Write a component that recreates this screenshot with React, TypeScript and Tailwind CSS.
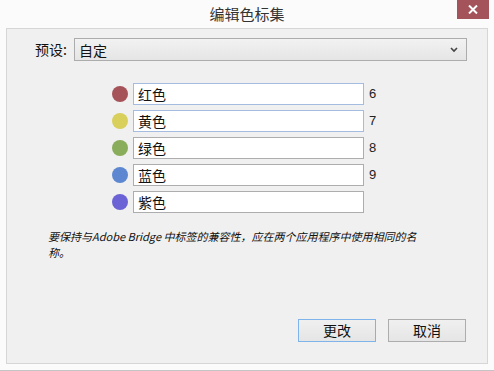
import React from "react";

const rows = [
  { name: "红色", color: "#a55358", num: "6", active: true },
  { name: "黄色", color: "#d9cf5b", num: "7", active: true },
  { name: "绿色", color: "#8aad5b", num: "8", active: false },
  { name: "蓝色", color: "#5d87d0", num: "9", active: false },
  { name: "紫色", color: "#6b63d5", num: "", active: false },
];

const font = { fontFamily: '"Noto Sans CJK SC", "Noto Sans", sans-serif' };

export default function App() {
  return (
    <div
      className="w-[494px] h-[371px] bg-[#fbfbfb] flex flex-col border-b border-[#c4c4c4] overflow-hidden"
      style={font}
    >
      <div className="h-[28px] flex items-start relative">
        <div className="flex-1 text-center text-[15px] leading-[28px] text-[#333333]">编辑色标集</div>
        <div className="absolute right-[5px] top-0 w-[32px] h-[19px] bg-[#a5535a] flex items-center justify-center">
          <svg width="10" height="9" viewBox="0 0 10 9">
            <path d="M1 0.5 L9 8.5 M9 0.5 L1 8.5" stroke="#ffffff" strokeWidth="2" />
          </svg>
        </div>
      </div>
      <div className="mx-[6px] w-[482px] h-[336px] border border-[#d6d6d6] bg-[#f0f0f0] flex flex-col">
        <div className="flex items-center pt-[9px] pl-[28px]">
          <span className="text-[14px] text-[#111] w-[39px] leading-[23px]">预设:</span>
          <div className="w-[393px] h-[23px] border border-[#acacac] bg-gradient-to-b from-[#f2f2f2] to-[#e5e5e5] flex items-center justify-between pl-[4px] pr-[8px]">
            <span className="text-[14px] text-[#111] leading-none">自定</span>
            <svg width="8" height="6" viewBox="0 0 8 6">
              <path d="M1 1 L4 4 L7 1" stroke="#444" strokeWidth="1.6" fill="none" />
            </svg>
          </div>
        </div>
        <div className="flex flex-col gap-[5px] mt-[22px] pl-[105px]">
          {rows.map((r) => (
            <div key={r.name} className="flex items-center h-[22px]">
              <div className="w-[16px] h-[16px] rounded-full" style={{ background: r.color }} />
              <div
                className={`ml-[5px] w-[231px] h-[22px] bg-white border flex items-center pl-[4px] text-[14px] text-[#111] ${
                  r.active ? "border-[#a4bcdf]" : "border-[#adadad]"
                }`}
              >
                {r.name}
              </div>
              <span className="ml-[5px] text-[13px] text-[#222]" style={{ fontFamily: '"Liberation Sans", sans-serif' }}>
                {r.num}
              </span>
            </div>
          ))}
        </div>
        <div className="mt-[15px] pl-[41px] text-[11px] leading-[16px] italic text-[#111]">
          要保持与Adobe Bridge 中标签的兼容性，应在两个应用程序中使用相同的名
          <br />
          称。
        </div>
        <div className="flex justify-end gap-[12px] mt-auto mb-[21px] pr-[21px]">
          <div className="w-[78px] h-[23px] border border-[#7eb4ea] bg-gradient-to-b from-[#f0f0f0] to-[#e5e5e5] flex items-center justify-center text-[14px] text-[#111]">
            更改
          </div>
          <div className="w-[78px] h-[23px] border border-[#adadad] bg-gradient-to-b from-[#f0f0f0] to-[#e5e5e5] flex items-center justify-center text-[14px] text-[#111]">
            取消
          </div>
        </div>
      </div>
    </div>
  );
}
